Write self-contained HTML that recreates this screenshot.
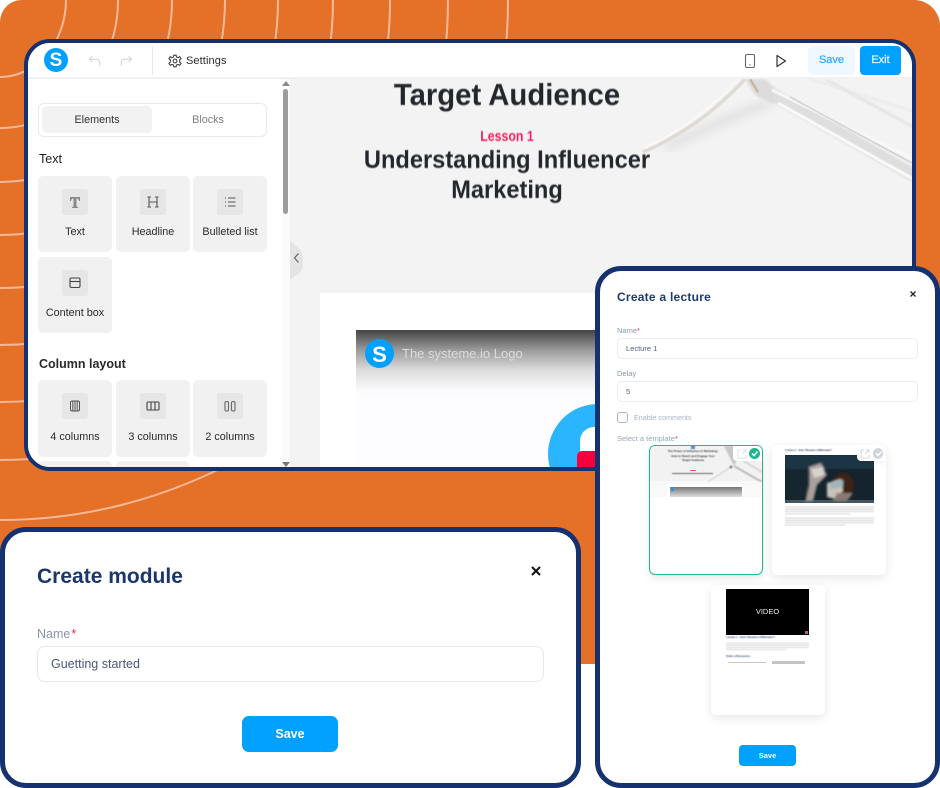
<!DOCTYPE html>
<html><head><meta charset="utf-8"><style>
*{box-sizing:border-box;margin:0;padding:0}
html,body{width:940px;height:788px;overflow:hidden;background:#fff;font-family:"Liberation Sans",sans-serif}
.a,.a *{position:absolute}
.a{position:absolute}
.t{white-space:nowrap;line-height:16px;height:16px}
.tile{width:74px;height:76px;background:#f1f1f1;border-radius:5px}
.tile i{display:block;left:24px;top:13px;width:26px;height:26px;background:#e6e6e6;border-radius:3px}
.tile svg{left:24px;top:13px;width:26px;height:26px}
.tile span{left:0;width:74px;top:48px;text-align:center;font-size:10.8px;line-height:16px;color:#2a2a2a;white-space:nowrap}
.blur{filter:blur(.4px)}
.head{transform:scaleX(.945);transform-origin:center}
</style></head><body>
<div class="a" style="left:0;top:0;width:940px;height:664px;background:#e57027;border-radius:22px 26px 0 0;overflow:hidden">
<svg width="940" height="664" style="left:0;top:0" fill="none" stroke="#f7b899" stroke-width="2">
<ellipse cx="0" cy="0" rx="66" ry="77"/><ellipse cx="0" cy="0" rx="118" ry="128"/><ellipse cx="0" cy="0" rx="172" ry="182"/><ellipse cx="0" cy="0" rx="225" ry="235"/><ellipse cx="0" cy="0" rx="278" ry="288"/><ellipse cx="0" cy="0" rx="333" ry="345"/><ellipse cx="0" cy="0" rx="390" ry="402"/><ellipse cx="0" cy="0" rx="448" ry="460"/><ellipse cx="0" cy="0" rx="508" ry="520"/>
</svg></div>

<!-- main editor card -->
<div class="a" style="left:24px;top:39px;width:892px;height:432px;background:#fff;border:4.5px solid #15316f;border-radius:26px;overflow:hidden">
 <div class="a" style="left:-28px;top:-43px;width:940px;height:520px">
  <!-- canvas -->
  <div class="a" style="left:290px;top:79px;width:630px;height:400px;background:#f3f3f3"></div>
  <svg class="a" width="630" height="190" viewBox="290 79 630 190" style="left:290px;top:79px" fill="none">
   <defs><filter id="b1"><feGaussianBlur stdDeviation="1"/></filter><filter id="b2"><feGaussianBlur stdDeviation="5"/></filter><filter id="b4"><feGaussianBlur stdDeviation=".6"/></filter></defs>
   <path d="M665 148C700 132 725 118 770 103" stroke="#dedede" stroke-width="8" filter="url(#b2)"/>
   <path d="M643 152C680 136 715 112 745 79" stroke="#ddd9d4" stroke-width="3.500" filter="url(#b4)"/>
   <path d="M645 148C680 132 712 108 738 79" stroke="#fafafa" stroke-width="2" filter="url(#b4)"/>
   <path d="M745 79L755 95L772 104L786 98L765 79Z" fill="#dcdcdc" filter="url(#b1)"/>
   <path d="M750 79L758 92" stroke="#bfae9a" stroke-width="2" filter="url(#b4)"/>
   <path d="M775 96L915 176" stroke="#dedede" stroke-width="13" filter="url(#b1)"/>
   <path d="M772 90L915 160" stroke="#f8f8f8" stroke-width="3" filter="url(#b4)"/>
   <path d="M778 103L915 180" stroke="#fbfbfb" stroke-width="3" filter="url(#b4)"/>
   <path d="M790 97L912 163" stroke="#9a8da2" stroke-width=".6" filter="url(#b4)"/>
   <path d="M825 79L915 128" stroke="#e2e2e2" stroke-width="2.500" filter="url(#b1)"/>
   <path d="M810 79L915 112" stroke="#e6e6e6" stroke-width="1.500" filter="url(#b1)"/>
  </svg>
  <div class="a t blur head" style="left:307px;width:400px;top:77px;height:36px;line-height:36px;text-align:center;font-size:31px;font-weight:bold;color:#23262b">Target Audience</div>
  <div class="a t blur" style="left:307px;width:400px;top:129px;text-align:center;font-size:14.5px;color:#f2205f;font-weight:bold;transform:scaleX(.85)">Lesson 1</div>
  <div class="a t blur head" style="left:307px;width:400px;top:145px;height:30px;line-height:30px;text-align:center;font-size:25px;font-weight:bold;color:#23262b">Understanding Influencer</div>
  <div class="a t blur head" style="left:307px;width:400px;top:175px;height:30px;line-height:30px;text-align:center;font-size:25px;font-weight:bold;color:#23262b">Marketing</div>
  <!-- page -->
  <div class="a" style="left:320px;top:293px;width:600px;height:190px;background:#fff"></div>
  <div class="a" style="left:356px;top:330px;width:300px;height:150px;background:linear-gradient(#444 0,#9a9a9a 20px,#dcdcdc 40px,#fbfafc 60px,#fdfcfe 70px)">
   <div class="a" style="left:192px;top:74px;width:100px;height:100px;border-radius:50%;background:#2bb5ff"></div>
   <div class="a" style="left:224px;top:97px;width:60px;height:40px;border-radius:14px;background:#fff"></div>
   <div class="a" style="left:221px;top:121px;width:60px;height:30px;border-radius:5px;background:#f5003d"></div>
   <div class="a" style="left:9px;top:9px;width:29px;height:29px;border-radius:50%;background:#00a0ff;color:#fff;font:bold 22px/31px 'Liberation Sans',sans-serif;text-align:center">S</div>
   <div class="a t" style="left:46px;top:16px;font-size:13px;color:#dcdcdc">The systeme.io Logo</div>
  </div>
  <!-- collapse -->
  <svg class="a" width="14" height="44" style="left:290px;top:238px"><path d="M0 2L8 10Q13 14 13 20 V28Q13 33 8 36L0 42Z" fill="#e4e4e4"/><path d="M8.500 15.500L4.500 20L8.500 24.500" fill="none" stroke="#666" stroke-width="1.200"/></svg>
  <!-- sidebar -->
  <div class="a" style="left:28px;top:79px;width:262px;height:400px;background:#fff;border-right:2px solid #f0f0f0"></div>
  <div class="a" style="left:282px;top:79px;width:8px;height:400px;background:#fbfbfb"></div>
  <div class="a" style="left:283px;top:89px;width:5px;height:125px;background:#9c9c9c;border-radius:3px"></div>
  <svg class="a" width="8" height="6" style="left:281.500px;top:81px"><path d="M4 0L8 5H0Z" fill="#8a8a8a"/></svg>
  <svg class="a" width="8" height="6" style="left:281.500px;top:462px"><path d="M0 0H8L4 5Z" fill="#777"/></svg>
  <div class="a" style="left:38px;top:103px;width:229px;height:34px;border:1px solid #e9e9e9;border-radius:6px"></div>
  <div class="a t" style="left:42px;top:106px;width:110px;height:27px;line-height:28px;background:#f2f2f2;border-radius:5px;text-align:center;font-size:10.8px;color:#333">Elements</div>
  <div class="a t" style="left:152px;top:106px;width:112px;height:27px;line-height:28px;text-align:center;font-size:10.8px;color:#7d7d7d">Blocks</div>
  <div class="a t" style="left:39px;top:151px;font-size:12.500px;color:#1f1f1f;line-height:17px">Text</div>
  <div class="a tile" style="left:38px;top:176px"><i></i><svg viewBox="0 0 26 26" fill="#8a8a8a"><path d="M8 8H18V12H17Q16.500 9.500 15 9.500H14.500V17.500L16 18V19H10V18L11.500 17.500V9.500H11Q9.500 9.500 9 12H8Z"/></svg><span>Text</span></div>
  <div class="a tile" style="left:116px;top:176px"><i></i><svg viewBox="0 0 26 26" fill="none" stroke="#555" stroke-width="1.100"><path d="M7.500 8H11M15 8H18.500M7.500 18H11M15 18H18.500M9 8V18M17 8V18M9 13H17"/></svg><span>Headline</span></div>
  <div class="a tile" style="left:193px;top:176px"><i></i><svg viewBox="0 0 26 26" fill="none" stroke="#555" stroke-width="1.100"><path d="M11 9H18.500M11 13H18.500M11 17H18.500M8 9H9M8 13H9M8 17H9"/></svg><span>Bulleted list</span></div>
  <div class="a tile" style="left:38px;top:257px"><i></i><svg viewBox="0 0 26 26" fill="none" stroke="#444" stroke-width="1.100"><rect x="8" y="8" width="10" height="9.500" rx="1.500"/><path d="M8 11.500H18"/></svg><span>Content box</span></div>
  <div class="a t" style="left:39px;top:356px;font-size:12.500px;font-weight:bold;color:#2a2a2a;line-height:17px">Column layout</div>
  <div class="a tile" style="left:38px;top:380px;height:77px"><i></i><svg viewBox="0 0 26 26" fill="none" stroke="#555" stroke-width="1"><rect x="8.500" y="8" width="9" height="10" rx="1.500"/><path d="M10.800 8V18M13 8V18M15.200 8V18"/></svg><span style="top:48.500px">4 columns</span></div>
  <div class="a tile" style="left:116px;top:380px;height:77px"><i></i><svg viewBox="0 0 26 26" fill="none" stroke="#444" stroke-width="1.100"><rect x="7" y="9" width="12" height="8" rx="1"/><path d="M11 9V17M15 9V17"/></svg><span style="top:48.500px">3 columns</span></div>
  <div class="a tile" style="left:193px;top:380px;height:77px"><i></i><svg viewBox="0 0 26 26" fill="none" stroke="#666" stroke-width="1.100"><rect x="8" y="8.500" width="3.500" height="9.500" rx="1.500"/><rect x="14.500" y="8.500" width="3.500" height="9.500" rx="1.500"/></svg><span style="top:48.500px">2 columns</span></div>
  <div class="a" style="left:38px;top:461px;width:74px;height:20px;background:#f1f1f1;border-radius:5px"></div>
  <div class="a" style="left:116px;top:461px;width:73px;height:20px;background:#f1f1f1;border-radius:5px"></div>
  <!-- header -->
  <div class="a" style="left:28px;top:43px;width:884px;height:36px;background:#fff;border-bottom:2px solid #f1f1f1"></div>
  <div class="a" style="left:44px;top:48px;width:24px;height:24px;border-radius:50%;background:#00a0ff;color:#fff;font:bold 19px/26px 'Liberation Sans',sans-serif;text-align:center">S</div>
  <svg class="a" width="14" height="12" viewBox="0 0 16 14" style="left:87.500px;top:55px" fill="none" stroke="#d6d6d6" stroke-width="1.300"><path d="M5 1.500L1.500 5L5 8.500M1.500 5H9.500Q13.500 5 13.500 9V13"/></svg>
  <svg class="a" width="14" height="12" viewBox="0 0 16 14" style="left:119px;top:55px" fill="none" stroke="#d6d6d6" stroke-width="1.300"><path d="M11 1.500L14.500 5L11 8.500M14.500 5H6.500Q2.500 5 2.500 9V13"/></svg>
  <div class="a" style="left:152px;top:46px;width:1px;height:29px;background:#e8e8e8"></div>
  <svg class="a" width="14" height="14" viewBox="0 0 24 24" style="left:167.500px;top:54px" fill="none" stroke="#3a3a3a" stroke-width="1.800" stroke-linejoin="round"><circle cx="12" cy="12" r="3.200"/><path d="M10 2H14L14.600 5.200L17.200 6.300L20 4.500L22.500 8L20 10.200V13.800L22.500 16L20 19.500L17.200 17.700L14.600 18.800L14 22H10L9.400 18.800L6.800 17.700L4 19.500L1.500 16L4 13.800V10.200L1.500 8L4 4.500L6.800 6.300L9.400 5.200Z"/></svg>
  <div class="a t" style="left:186px;top:53px;font-size:11px;color:#2b2b2b;letter-spacing:.1px;line-height:17px">Settings</div>
  <svg class="a" width="12" height="16" style="left:744px;top:53px" fill="none" stroke="#666" stroke-width="1.100"><rect x="1.500" y="1.500" width="9" height="13" rx="1.500"/><path d="M5.500 11.800H6.500" stroke="#444"/></svg>
  <svg class="a" width="12" height="14" style="left:775px;top:54px" fill="none" stroke="#333" stroke-width="1.200"><path d="M2 1.500L10.500 7L2 12.500Z" stroke-linejoin="round"/></svg>
  <div class="a t" style="left:808px;top:46px;width:47px;height:29px;line-height:29px;background:#eff8ff;border-radius:5px;text-align:center;font-size:11px;color:#35a9ff;-webkit-text-stroke:.25px #35a9ff">Save</div>
  <div class="a t" style="left:860px;top:46px;width:41px;height:29px;line-height:29px;background:#00a0ff;border-radius:4px;text-align:center;font-size:11px;color:#e8f6ff;-webkit-text-stroke:.25px #e8f6ff">Exit</div>
 </div>
</div>

<!-- right modal -->
<div class="a" style="left:595px;top:266px;width:345px;height:522px;background:#fff;border:5px solid #15316f;border-radius:26px"></div>
<div class="a" style="left:0;top:0;width:940px;height:788px">
 <div class="a t" style="left:617px;top:289px;font-size:12px;font-weight:bold;color:#1f3a73;letter-spacing:.25px">Create a lecture</div>
 <svg class="a" width="6" height="6" style="left:909.500px;top:290.500px" stroke="#222" stroke-width="1.300"><path d="M.500 .500L5.500 5.500M5.500 .500L.500 5.500"/></svg>
 <div class="a t" style="left:617px;top:323px;font-size:7.500px;color:#8a96ad">Name<span style="position:static;color:#f2205f">*</span></div>
 <div class="a" style="left:617px;top:338px;width:301px;height:21px;border:1px solid #ececf0;border-radius:5px"></div>
 <div class="a t" style="left:626px;top:340.500px;font-size:7.500px;color:#4f5f82">Lecture 1</div>
 <div class="a t" style="left:617px;top:366px;font-size:7.500px;color:#8a96ad">Delay</div>
 <div class="a" style="left:617px;top:381px;width:301px;height:21px;border:1px solid #ececf0;border-radius:5px"></div>
 <div class="a t" style="left:626px;top:384px;font-size:7.500px;color:#4f5f82">5</div>
 <div class="a" style="left:617px;top:412px;width:10.500px;height:11px;border:1px solid #aeb7c8;border-radius:3px"></div>
 <div class="a t" style="left:634px;top:410px;font-size:7.200px;color:#aab3c6">Enable comments</div>
 <div class="a t" style="left:617px;top:431px;font-size:7.500px;color:#9aa5ba">Select a template<span style="position:static;color:#f2205f">*</span></div>

 <!-- thumb 1 -->
 <div class="a" style="left:649px;top:445px;width:114px;height:130px;background:#fff;border:1.500px solid #28b88f;border-radius:6px;box-shadow:0 4px 8px rgba(0,0,0,.08);overflow:hidden">
  <div class="a" style="left:0;top:0;width:112px;height:35px;background:#f2f2f2"></div>
  <div class="a" style="left:0;top:35px;width:112px;height:16px;background:#f9f9f9"></div>
  <svg class="a" width="112" height="36" style="left:0;top:0;filter:blur(.4px)" fill="none"><path d="M58 36L81 21" stroke="#cfcfcf" stroke-width="1"/><path d="M74 0L84 20L95 0Z" fill="#c8c8c8"/><path d="M84 20L112 36" stroke="#bcbcbc" stroke-width="2"/><path d="M92 14L112 26" stroke="#d5d5d5" stroke-width="2"/><circle cx="81" cy="21" r="1.500" fill="#888"/></svg>
  <div class="a" style="left:17px;top:38px;width:76px;height:14px;background:#fff"></div>
  <div class="a" style="left:20px;top:41px;width:72px;height:10px;background:linear-gradient(#777,#ddd)"></div>
  <div class="a" style="left:21px;top:42px;width:3px;height:3px;border-radius:50%;background:#2a8fe8"></div>
  <div class="a t blur" style="left:-12px;width:110px;top:2.500px;text-align:center;font-size:2.900px;line-height:4.500px;height:5px;font-weight:bold;color:#333">The Power of Influence in Marketing:</div>
  <div class="a t blur" style="left:-12px;width:110px;top:7.500px;text-align:center;font-size:2.900px;line-height:4.500px;height:5px;font-weight:bold;color:#333">How to Reach and Engage Your</div>
  <div class="a t blur" style="left:-12px;width:110px;top:12px;text-align:center;font-size:2.900px;line-height:4.500px;height:5px;font-weight:bold;color:#333">Target Audience</div>
  <div class="a" style="left:40px;top:23.500px;width:6px;height:1.200px;background:#f2507f;filter:blur(.3px)"></div>
  <div class="a" style="left:22px;top:26.500px;width:41px;height:1.500px;background:#666;filter:blur(.4px)"></div>
  <div class="a" style="left:41px;top:-1px;width:4px;height:3.500px;background:#5a8ac8;filter:blur(.4px)"></div>
  <div class="a" style="left:83px;top:0;width:30px;height:15px;background:#fff;border-radius:0 0 0 4px"></div>
  <svg class="a" width="10" height="10" style="left:87px;top:3px" fill="none" stroke="#dfe3ea" stroke-width="1"><path d="M4 1H1V9H9V6"/><path d="M5 5L9 1M6 1H9V4"/></svg>
  <div class="a" style="left:99px;top:2px;width:11px;height:11px;border-radius:50%;background:#1fb58f"></div>
  <svg class="a" width="11" height="11" style="left:99px;top:2px" fill="none" stroke="#fff" stroke-width="1.500"><path d="M3 5.500L5 7.500L8.500 3.500"/></svg>
 </div>

 <!-- thumb 2 -->
 <div class="a" style="left:772px;top:445px;width:114px;height:130px;background:#fff;border-radius:5px;box-shadow:0 3px 10px rgba(0,0,0,.1);overflow:hidden">
  <div class="a t blur" style="left:13px;top:-2px;font-size:2.500px;font-weight:bold;color:#2c3c66">Lecture 2 - How I Became a Millionaire?</div>
  <svg class="a" width="89" height="48" viewBox="0 0 89 48" style="left:13px;top:10px">
   <defs><filter id="b3"><feGaussianBlur stdDeviation="1"/></filter></defs>
   <rect width="89" height="48" fill="#14232d"/>
   <g filter="url(#b3)">
    <rect x="0" y="0" width="89" height="14" fill="#1b3445"/>
    <rect x="0" y="14" width="22" height="34" fill="#15262f"/>
    <path d="M24 12L36 8L42 20L32 30L28 46H21L24 30Z" fill="#a99f9b"/>
    <path d="M26 14L38 12L39 20L29 23Z" fill="#d8d2cc"/>
    <ellipse cx="58" cy="30" rx="11" ry="12" fill="#3c2318"/>
    <path d="M42 28L56 24L58 36L50 44L42 42Z" fill="#c9c2bb"/>
    <path d="M44 28L58 25L58 32L46 34Z" fill="#9fb5b9"/>
    <path d="M52 38L68 38L62 46L48 46Z" fill="#8c7a72"/>
   </g>
   <rect y="45" width="89" height="3" fill="#8fa0aa" opacity=".4"/>
  </svg>
  <svg class="a" width="89" height="24" style="left:13px;top:60px;filter:blur(.4px)" stroke="#c6c6c6" stroke-width=".8"><path d="M0 2H89M0 4.300H89M0 6.600H89M0 8.900H65M0 13H89M0 15.300H89M0 17.600H89M0 19.900H60"/></svg>
  <div class="a" style="left:85px;top:2px;width:29px;height:14px;background:#fff;border-radius:0 0 0 4px;box-shadow:0 2px 4px rgba(0,0,0,.06)"></div>
  <svg class="a" width="10" height="10" style="left:88px;top:4px" fill="none" stroke="#d6dae2" stroke-width="1"><path d="M4 1H1V9H9V6"/><path d="M5 5L9 1M6 1H9V4"/></svg>
  <div class="a" style="left:100.500px;top:3px;width:10.500px;height:10.500px;border-radius:50%;background:#cfd5de"></div>
  <svg class="a" width="11" height="11" style="left:100.500px;top:3px" fill="none" stroke="#fff" stroke-width="1.300"><path d="M3 5.500L5 7.500L8.500 3.500"/></svg>
 </div>

 <!-- thumb 3 -->
 <div class="a" style="left:711px;top:585px;width:114px;height:130px;background:#fff;border-radius:5px;box-shadow:0 3px 10px rgba(0,0,0,.1);overflow:hidden">
  <div class="a" style="left:15px;top:4px;width:83px;height:46px;background:#000"></div>
  <div class="a t" style="left:15px;top:19px;width:83px;text-align:center;font-size:7.500px;color:#eee">VIDEO</div>
  <div class="a" style="left:93.500px;top:45.500px;width:3px;height:3px;background:#b86470"></div>
  <div class="a t blur" style="left:15px;top:45px;font-size:2.600px;font-weight:bold;color:#2c4474">Lecture 1 - How I Became a Millionaire?</div>
  <svg class="a" width="83" height="10" style="left:15px;top:57px;filter:blur(.4px)" stroke="#cbcbcb" stroke-width=".8"><path d="M0 1H83M0 3.200H83M0 5.400H83M0 7.600H60"/></svg>
  <div class="a t blur" style="left:15px;top:64px;font-size:2.700px;font-weight:bold;color:#2c4474">Order a Resources</div>
  <div class="a" style="left:17px;top:77px;width:38px;height:1.200px;background:#c8c8c8;filter:blur(.3px)"></div>
  <div class="a" style="left:61px;top:76px;width:33px;height:3px;background:#c4c4c4;filter:blur(.3px)"></div>
 </div>

 <div class="a t" style="left:739px;top:745px;width:57px;height:21px;line-height:21px;background:#00a0ff;border-radius:4px;text-align:center;font-size:7.500px;font-weight:bold;color:#fff">Save</div>
</div>

<!-- bottom-left modal -->
<div class="a" style="left:0;top:527px;width:581px;height:261px;background:#fff;border:5px solid #15316f;border-radius:26px"></div>
<div class="a t" style="left:37px;top:564px;height:26px;line-height:26px;font-size:21px;font-weight:bold;color:#1d3669">Create module</div>
<svg class="a" width="10" height="10" style="left:531px;top:566px" stroke="#111" stroke-width="2"><path d="M1 1L9 9M9 1L1 9"/></svg>
<div class="a t" style="left:37px;top:626px;font-size:12.500px;color:#8a93a8">Name<span style="position:static;color:#f2205f;margin-left:1px">*</span></div>
<div class="a" style="left:37px;top:646px;width:507px;height:36px;border:1px solid #e8e8ec;border-radius:8px"></div>
<div class="a t" style="left:51px;top:656px;font-size:12.500px;color:#4a5878">Guetting started</div>
<div class="a t" style="left:242px;top:716px;width:96px;height:36px;line-height:36px;background:#00a0ff;border-radius:7px;text-align:center;font-size:12.500px;font-weight:bold;color:#fff">Save</div>
</body></html>
